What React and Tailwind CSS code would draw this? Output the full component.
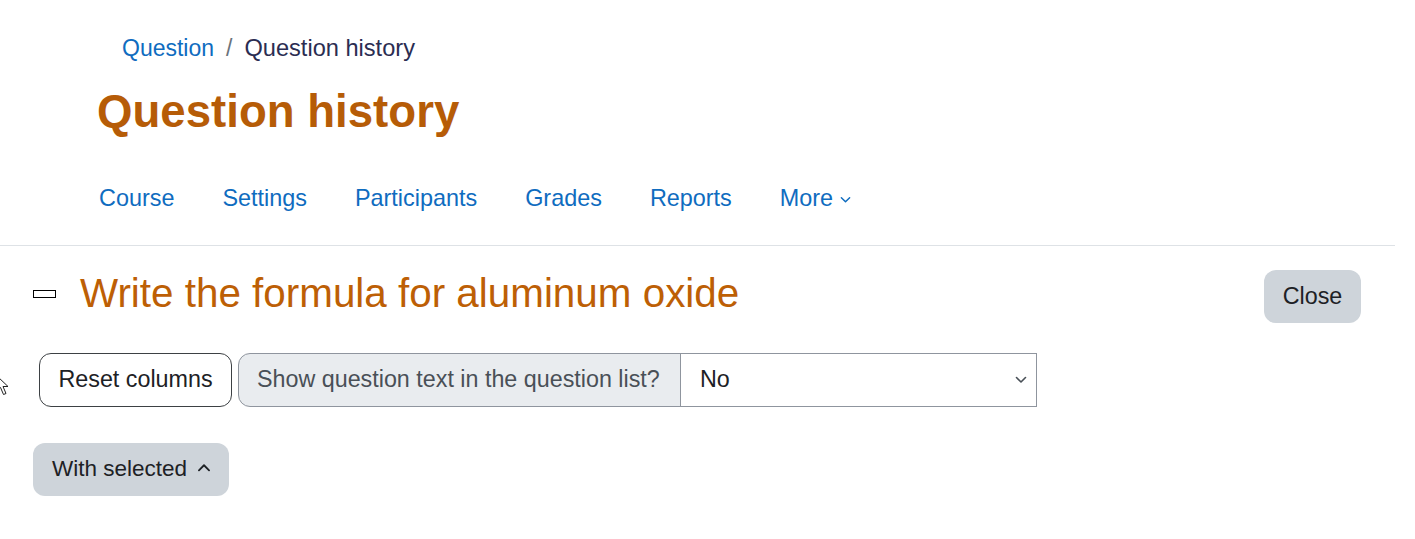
import React from "react";

function ChevronDown({ className }) {
  return (
    <svg className={className} viewBox="0 0 12 8" fill="none" stroke="currentColor" strokeWidth="1.6" strokeLinecap="round" strokeLinejoin="round">
      <path d="M1.5 1.5 L6 6 L10.5 1.5" />
    </svg>
  );
}

function ChevronUp({ className }) {
  return (
    <svg className={className} viewBox="0 0 12 8" fill="none" stroke="currentColor" strokeWidth="1.6" strokeLinecap="round" strokeLinejoin="round">
      <path d="M1.5 6.5 L6 2 L10.5 6.5" />
    </svg>
  );
}

export default function App() {
  const navItems = ["Course", "Settings", "Participants", "Grades", "Reports"];
  return (
    <div
      className="relative w-full h-[539px] overflow-hidden bg-white text-[#1d2125] text-[23.3px] leading-[33.75px]"
      style={{ fontFamily: '"Liberation Sans", Arial, sans-serif' }}
    >
      {/* Header */}
      <div className="pt-[32px]">
        <nav className="pl-[122px] flex items-center text-[23px]">
          <a className="text-[#0f6cbf]">Question</a>
          <span className="pl-[12px] pr-[12px] text-[#6a737b]">/</span>
          <span className="text-[#2b2d52] text-[23.6px]">Question history</span>
        </nav>
        <h1 className="mt-[19px] pl-[97px] text-[45.6px] leading-[54px] font-bold text-[#b65c07]">
          Question history
        </h1>
        <ul className="mt-[31px] pl-[75px] flex items-center text-[23.4px]">
          {navItems.map((n) => (
            <li key={n} className="px-[24px] py-[12px] text-[#0f6cbf]">
              {n}
            </li>
          ))}
          <li className="px-[24px] py-[12px] text-[#0f6cbf] flex items-center">
            More
            <ChevronDown className="ml-[7px] w-[11px] h-[8px] mt-[3px]" />
          </li>
        </ul>
      </div>

      <div className="mt-[17px] mr-[20px] h-px bg-[#dee2e6]" />

      {/* Question section */}
      <div className="pl-[33px] pr-[54px]">
        <div className="mt-[23px] flex items-start justify-between">
          <div className="flex items-center">
            <span className="w-[23px] h-[8px] border-[1.5px] border-black box-border mt-[2px]" />
            <h2 className="ml-[24px] text-[40.4px] leading-[48px] text-[#bd5f05]">
              Write the formula for aluminum oxide
            </h2>
          </div>
          <button className="mt-[1px] h-[53px] w-[97px] pt-[1px] rounded-[12px] bg-[#ced4da] text-[#1d2125]">
            Close
          </button>
        </div>

        <div className="mt-[30px] flex items-center">
          <button className="ml-[6px] h-[54px] w-[193px] rounded-[12px] border border-[#3d4144] bg-white text-[#1d2125]">
            Reset columns
          </button>
          <div className="ml-[6px] flex items-stretch h-[54px]">
            <div className="flex items-center w-[443px] px-[18px] rounded-l-[12px] border border-[#8f959e] bg-[#e9ecef] text-[#495057]">
              Show question text in the question list?
            </div>
            <div className="flex items-center justify-between w-[357px] -ml-px pl-[19px] pr-[9px] border border-[#8f959e] bg-white text-[#1d2125]">
              <span>No</span>
              <ChevronDown className="w-[12px] h-[8px] text-[#495057]" />
            </div>
          </div>
        </div>

        <div className="mt-[36px]">
          <button className="h-[53px] w-[196px] pl-[19px] rounded-[12px] bg-[#ced4da] text-[#1d2125] text-[22.5px] flex items-center">
            With selected
            <ChevronUp className="ml-[10px] w-[14px] h-[9px] mb-[3px]" />
          </button>
        </div>
      </div>

      {/* Mouse cursor partially visible at left edge */}
      <svg
        className="absolute left-[-4px] top-[375px] w-[14px] h-[21px]"
        viewBox="0 0 14 21"
        fill="white"
        stroke="#222"
        strokeWidth="1"
        strokeLinejoin="round"
      >
        <path d="M1 1 L1 16 L4.5 12.5 L7.5 19.5 L10 18.5 L7 11.5 L12 11.5 Z" />
      </svg>
    </div>
  );
}
